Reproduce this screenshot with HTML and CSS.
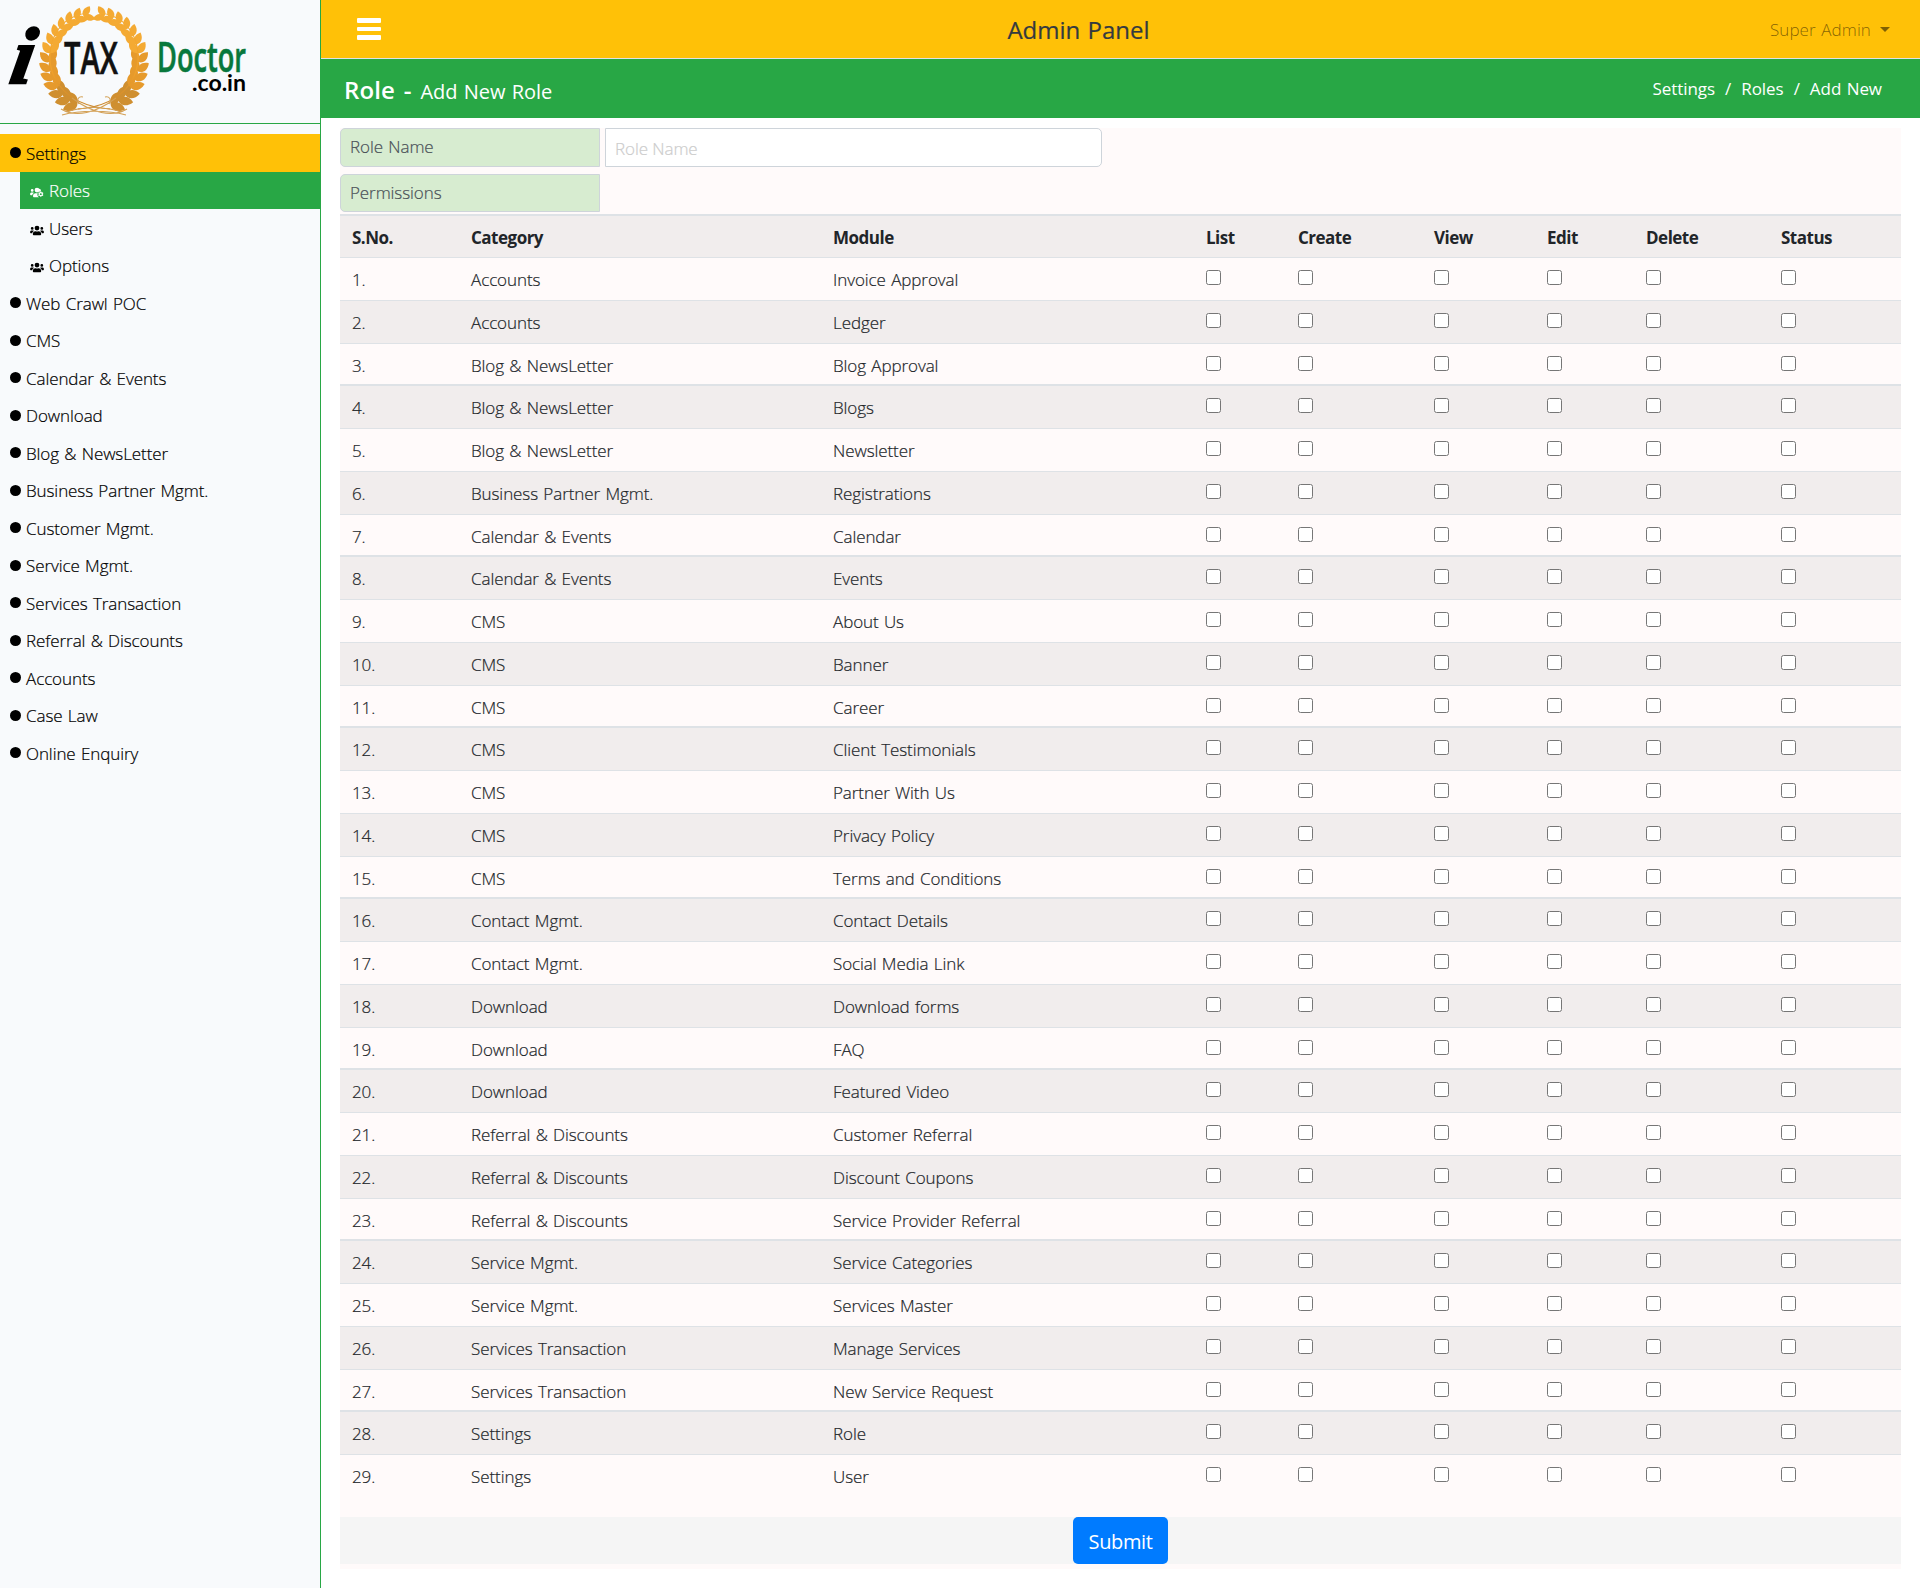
FILE: index.html
```html
<!DOCTYPE html>
<html lang="en">
<head>
<meta charset="utf-8">
<title>Admin Panel</title>
<link rel="stylesheet" href="styles.css">
</head>
<body>
<svg class="defs" width="0" height="0">
  <symbol id="users" viewBox="0 0 640 512"><path d="M96 224a64 64 0 1 0 0-128 64 64 0 0 0 0 128zm448 0a64 64 0 1 0 0-128 64 64 0 0 0 0 128zm32 32h-64c-18 0-34 7-45 19 40 22 69 62 75 109h66c18 0 32-14 32-32v-32c0-35-29-64-64-64zm-256 0a112 112 0 1 0 0-224 112 112 0 0 0 0 224zm77 32h-8a155 155 0 0 1-138 0h-8c-64 0-115 52-115 115v29c0 27 21 48 48 48h288c27 0 48-21 48-48v-29c0-63-51-115-115-115zm-224-13c-11-12-27-19-45-19H64c-35 0-64 29-64 64v32c0 18 14 32 32 32h66c6-47 35-87 75-109z"/></symbol>
  <symbol id="users-cog" viewBox="0 0 640 512"><path d="M96 224a64 64 0 1 0 0-128 64 64 0 0 0 0 128zm77 51c-11-12-27-19-45-19H64c-35 0-64 29-64 64v32c0 18 14 32 32 32h66c6-47 35-87 75-109zM320 256a112 112 0 1 0 0-224 112 112 0 0 0 0 224zM355 288h-104c-64 0-115 52-115 115v29c0 27 21 48 48 48h232a150 150 0 0 1-61-192z"/><path fill-rule="evenodd" d="M470 208h52l8 36 26 14 35-11 26 45-27 25v30l27 25-26 45-35-11-26 15-8 35h-52l-8-35-26-15-35 11-26-45 27-25v-30l-27-25 26-45 35 11 26-14zm26 78a46 46 0 1 0 0 92 46 46 0 0 0 0-92z"/><circle cx="430" cy="150" r="70"/></symbol>
</svg>
<div class="layout">
  <aside class="sidebar">
    <div class="brand">
      <svg width="320" height="123" viewBox="0 0 320 123">
        <defs>
          <linearGradient id="gold" gradientUnits="userSpaceOnUse" x1="0" y1="5" x2="0" y2="118"><stop offset="0" stop-color="#f6ae35"/><stop offset=".6" stop-color="#f0a02a"/><stop offset="1" stop-color="#bf7f2c"/></linearGradient>
        </defs>
        <g id="laurel"></g>
        <g fill="none" stroke="#d3a055" stroke-width="1.1">
          <path d="M61 109C76 118 96 113 116 98M127 109C112 118 92 113 72 98M62 115C80 110 108 110 126 115M66 112C84 106 104 106 122 112M79 104C76 99 79 96 83 97M109 104C112 99 109 96 105 97"/>
        </g>
        <text class="logo-i" transform="translate(8 83) skewX(-10)" x="0" y="0">i</text>
        <text class="logo-tax" x="64" y="74" textLength="54" lengthAdjust="spacingAndGlyphs">TAX</text>
        <text class="logo-doctor" x="157" y="72" textLength="89" lengthAdjust="spacingAndGlyphs">Doctor</text>
        <text class="logo-domain" x="192" y="91" textLength="54" lengthAdjust="spacingAndGlyphs">.co.in</text>
      </svg>
    </div>
    <nav class="menu">
      <a class="item active"><i class="dot"></i>Settings</a>
      <div class="submenu">
        <a class="item current"><svg class="ico"><use href="#users-cog"/></svg>Roles</a>
        <a class="item"><svg class="ico"><use href="#users"/></svg>Users</a>
        <a class="item"><svg class="ico"><use href="#users"/></svg>Options</a>
      </div>
      <a class="item"><i class="dot"></i>Web Crawl POC</a>
      <a class="item"><i class="dot"></i>CMS</a>
      <a class="item"><i class="dot"></i>Calendar &amp; Events</a>
      <a class="item"><i class="dot"></i>Download</a>
      <a class="item"><i class="dot"></i>Blog &amp; NewsLetter</a>
      <a class="item"><i class="dot"></i>Business Partner Mgmt.</a>
      <a class="item"><i class="dot"></i>Customer Mgmt.</a>
      <a class="item"><i class="dot"></i>Service Mgmt.</a>
      <a class="item"><i class="dot"></i>Services Transaction</a>
      <a class="item"><i class="dot"></i>Referral &amp; Discounts</a>
      <a class="item"><i class="dot"></i>Accounts</a>
      <a class="item"><i class="dot"></i>Case Law</a>
      <a class="item"><i class="dot"></i>Online Enquiry</a>
    </nav>
  </aside>
  <main class="main">
    <header class="navbar">
      <div class="burger"><i></i><i></i><i></i></div>
      <div class="title">Admin Panel</div>
      <div class="account">Super Admin<i class="caret"></i></div>
    </header>
    <div class="pagehead">
      <h1>Role - <small>Add New Role</small></h1>
      <div class="crumbs"><span>Settings</span><span>/</span><span>Roles</span><span>/</span><span>Add New</span></div>
    </div>
    <form class="content">
      <div class="field"><label class="label">Role Name</label><input class="input" type="text" placeholder="Role Name"></div>
      <div class="field second"><label class="label">Permissions</label></div>
      <table class="perms">
        <colgroup><col class="c1"><col class="c2"><col class="c3"><col class="c4"><col class="c5"><col class="c6"><col class="c7"><col class="c8"><col></colgroup>
        <thead><tr><th>S.No.</th><th>Category</th><th>Module</th><th>List</th><th>Create</th><th>View</th><th>Edit</th><th>Delete</th><th>Status</th></tr></thead>
        <tbody id="rows"></tbody>
      </table>
      <div class="footer"><button class="submit" type="button">Submit</button></div>
    </form>
  </main>
</div>
<script src="app.js"></script>
</body>
</html>
```
FILE: app.js
```js
const modules = [
  ["Accounts", "Invoice Approval"], ["Accounts", "Ledger"],
  ["Blog & NewsLetter", "Blog Approval"], ["Blog & NewsLetter", "Blogs"], ["Blog & NewsLetter", "Newsletter"],
  ["Business Partner Mgmt.", "Registrations"],
  ["Calendar & Events", "Calendar"], ["Calendar & Events", "Events"],
  ["CMS", "About Us"], ["CMS", "Banner"], ["CMS", "Career"], ["CMS", "Client Testimonials"],
  ["CMS", "Partner With Us"], ["CMS", "Privacy Policy"], ["CMS", "Terms and Conditions"],
  ["Contact Mgmt.", "Contact Details"], ["Contact Mgmt.", "Social Media Link"],
  ["Download", "Download forms"], ["Download", "FAQ"], ["Download", "Featured Video"],
  ["Referral & Discounts", "Customer Referral"], ["Referral & Discounts", "Discount Coupons"],
  ["Referral & Discounts", "Service Provider Referral"],
  ["Service Mgmt.", "Service Categories"], ["Service Mgmt.", "Services Master"],
  ["Services Transaction", "Manage Services"], ["Services Transaction", "New Service Request"],
  ["Settings", "Role"], ["Settings", "User"]
];
const body = document.getElementById("rows");
modules.forEach(([category, name], i) => {
  const tr = body.insertRow();
  [`${i + 1}.`, category, name].forEach(t => { tr.insertCell().textContent = t; });
  for (let k = 0; k < 6; k++) {
    const box = document.createElement("input");
    box.type = "checkbox";
    tr.insertCell().append(box);
  }
});

// Laurel wreath: leaves along both halves of an ellipse, growing from the foot to the top.
const parts = [];
for (let n = 0; n < 14; n++) {
  const a = (112 + n * 11.1) * Math.PI / 180;
  const x = 94 + 44 * Math.cos(a), y = 61 + 46 * Math.sin(a);
  const dir = Math.atan2(46 * Math.cos(a), -44 * Math.sin(a)) * 180 / Math.PI;
  const s = 1.2 - n * 0.022;
  [-40, 32].forEach(turn => parts.push(
    `<path transform="translate(${x.toFixed(1)} ${y.toFixed(1)}) rotate(${(dir + turn).toFixed(1)}) scale(${s.toFixed(2)})" d="M0 0C2-5 8-6 13-1C9 4 4 4 0 0Z"/>`));
}
const half = `<g>${parts.map((p, i) => p.replace("<path", `<path fill="${i < 6 ? "#cf8f30" : i < 14 ? "#e69a2c" : "#f4aa33"}"`)).join("")}</g><path d="M110 109C60 105 44 72 52 42C58 24 70 15 88 13" fill="none" stroke="url(#gold)" stroke-width="1.2"/>`;
document.getElementById("laurel").innerHTML = half + `<g transform="translate(188 0) scale(-1 1)">${half}</g>`;
```
FILE: styles.css
```css
* { box-sizing: border-box; }
body { margin: 0; background: #fff; color: #212529; font: 350 17px/27px "Open Sans", "Noto Sans", sans-serif; letter-spacing: -0.08px; word-spacing: 1px; -webkit-text-stroke: 0.2px; }
.defs { position: absolute; }
.layout { display: flex; height: 1588px; }
.sidebar { width: 321px; flex: none; background: #f8fafc; border-right: 1px solid #28a745; }
.brand { height: 124px; border-bottom: 1px solid #28a745; }
.brand svg { display: block; overflow: visible; }
.brand text { letter-spacing: 0; word-spacing: 0; }
.logo-i { font: italic 700 80px "Liberation Serif", serif; stroke: #000; stroke-width: 2.5px; }
.logo-tax { font: 600 46px "Open Sans", sans-serif; fill: #111; stroke: #111; stroke-width: .6px; }
.logo-doctor { font: 600 41px "Open Sans", sans-serif; fill: #08783c; stroke: #08783c; stroke-width: .6px; }
.logo-domain { font: 700 22px Lato, sans-serif; fill: #000; }
.menu { padding-top: 10px; color: #000; }
.item { display: flex; align-items: center; height: 37.5px; padding: 1px 0 0 10px; }
.item.active { background: #ffc107; }
.submenu { padding-left: 20px; }
.item.current { background: #28a745; color: #fff; }
.dot { width: 11px; height: 11px; border-radius: 50%; background: #000; margin: 0 5px 1px 0; }
.ico { width: 14px; height: 11px; margin: 4px 5px 0 0; fill: currentColor; }
.main { flex: 1; min-width: 0; }
.navbar { height: 59px; background: #ffc107; border-bottom: 1px solid #dee2e6; display: flex; align-items: center; justify-content: space-between; padding: 0 30px 0 36px; }
.burger { width: 24px; display: grid; gap: 4px; }
.burger i { height: 4.5px; background: #fff; border-radius: 1px; }
.title { font-size: 24px; font-weight: 500; color: #343a40; letter-spacing: 0; margin: 0 0 0 6px; }
.account { color: rgba(0,0,0,.5); display: flex; align-items: center; letter-spacing: 0.1px; -webkit-text-stroke: 0; }
.caret { border: 5px solid transparent; border-top-color: currentColor; border-bottom: 0; margin-left: 9px; }
.pagehead { height: 59px; background: #28a745; color: #fff; display: flex; align-items: center; justify-content: space-between; padding: 0 38px 0 23px; -webkit-text-stroke: 0; }
h1 { margin: 0; padding-top: 3px; font-size: 24px; font-weight: 600; letter-spacing: 0.1px; word-spacing: 2.5px; }
h1 small { font-size: 20px; font-weight: 400; letter-spacing: 0; word-spacing: 1px; }
.crumbs { display: flex; gap: 10px; font-weight: 400; letter-spacing: -0.05px; }
.content { margin: 10px 19px 0; height: 1441px; background: #fffafa; }
.field { display: flex; gap: 5px; height: 39px; }
.field.second { margin-top: 7px; height: 38px; }
.label { width: 260px; padding: 4px 9px; background: #d7ecd0; border: 1px solid #ced4da; border-radius: 5px 0 0 5px; color: #495057; }
.input { width: 497px; padding: 2px 9px 0; border: 1px solid #ced4da; border-radius: 0 5px 5px 0; background: #fff; font: inherit; letter-spacing: inherit; }
.input::placeholder { color: #ccc; opacity: 1; }
.perms { width: 1561px; margin-top: 2px; table-layout: fixed; border-collapse: separate; border-spacing: 0; }
.c1 { width: 119px; } .c2 { width: 362px; } .c3 { width: 373px; } .c4 { width: 92px; } .c5 { width: 136px; } .c6 { width: 113px; } .c7 { width: 99px; } .c8 { width: 135px; }
th, td { padding: 1.5px 12px 0; text-align: left; vertical-align: middle; border-top: 1px solid #dee2e6; }
th { height: 43px; font-weight: 700; border-top-width: 2px; letter-spacing: -0.5px; -webkit-text-stroke: 0; }
td { height: 42.76px; }
tbody tr:nth-child(4n) td { box-shadow: 0 -1px #dee2e6; }
thead tr, tbody tr:nth-child(even) { background: #f1eded; }
td input { display: block; width: 15px; height: 15px; margin: 0 0 4px; }
.footer { margin-top: 20px; height: 47px; background: #f5f5f5; display: flex; justify-content: center; }
.submit { width: 95px; height: 47px; padding: 2px 0 0; border: 0; border-radius: 5px; background: #007bff; color: #fff; font: 400 20px "Open Sans", sans-serif; letter-spacing: -0.4px; -webkit-text-stroke: 0; }
```
